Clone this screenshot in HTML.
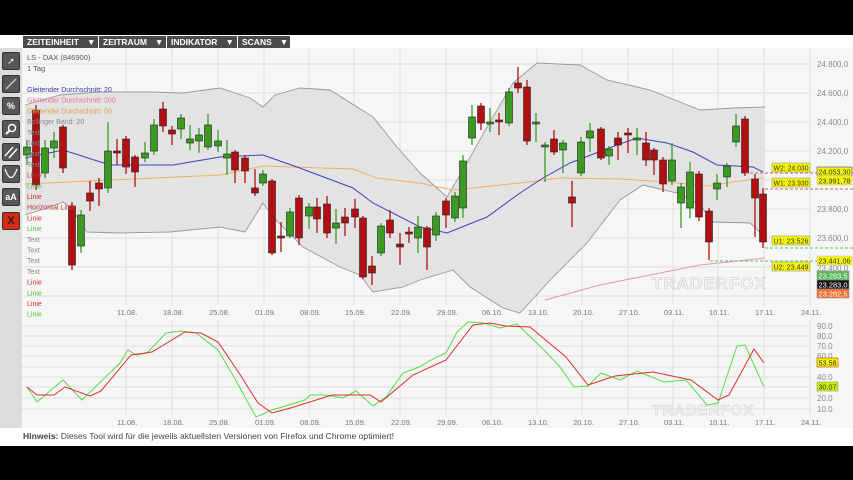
<!DOCTYPE html>
<html><head><meta charset="utf-8"><style>
*{margin:0;padding:0;box-sizing:border-box}
body{width:853px;height:480px;background:#000;position:relative;overflow:hidden;font-family:"Liberation Sans",sans-serif}
#wrap{position:absolute;left:0;top:35px;width:853px;height:411px;background:#fff}
#tb{position:absolute;left:23px;top:1px;height:12px;display:flex}
#tb div{background:#4b4b4b;color:#fff;font-weight:bold;font-size:8.5px;line-height:12px;padding:0 4px 0 4px;margin-right:1px;display:flex;justify-content:space-between}
#tb span{margin-left:8px}
#lp{position:absolute;left:0;top:13px;width:22px;height:380px;background:#dcdcdc}
.bt{position:absolute;left:2px;width:18px;height:18px;background:#575757;border:1px solid #333;border-radius:2px;color:#fff;font-size:9px;text-align:center;line-height:17px}
#hint{position:absolute;left:23px;top:396px;font-size:8.6px;color:#444}
</style></head><body>
<div id="wrap">
<div id="tb"><div style="width:75px">ZEITEINHEIT<span>▼</span></div><div style="width:67px">ZEITRAUM<span>▼</span></div><div style="width:70px">INDIKATOR<span>▼</span></div><div style="width:52px">SCANS<span>▼</span></div></div>
<div id="lp">
<div class="bt" style="top:4px">➚</div>
<div class="bt" style="top:27px"><svg width="16" height="16"><path d="M3 13L13 3" stroke="#ddd" stroke-width="1.2"/></svg></div>
<div class="bt" style="top:49px;font-weight:bold">%</div>
<div class="bt" style="top:72px"><svg width="16" height="16"><circle cx="9" cy="7" r="3.5" stroke="#fff" stroke-width="1.5" fill="none"/><path d="M6.5 9.5L3 13" stroke="#fff" stroke-width="2"/></svg></div>
<div class="bt" style="top:95px"><svg width="16" height="16"><path d="M2 12L10 3M6 14L14 5" stroke="#fff" stroke-width="1.4"/></svg></div>
<div class="bt" style="top:117px"><svg width="16" height="16"><path d="M2 3Q8 20 14 3" stroke="#fff" stroke-width="1.2" fill="none"/></svg></div>
<div class="bt" style="top:140px;font-weight:bold">aA</div>
<div class="bt" style="top:164px;background:#d42a16;color:#222;font-weight:bold;font-size:11px">X</div>
</div>
<div id="hint"><b>Hinweis:</b> Dieses Tool wird für die jeweils aktuellsten Versionen von Firefox und Chrome optimiert!</div>
</div>
<svg id="ch" width="853" height="480" style="position:absolute;left:0;top:0" font-family="Liberation Sans, sans-serif"></svg>
<script>
var s='';
s+='<rect x="22" y="48" width="831" height="380" fill="#f6f6f6"/>';
var dx=[126,172,218,264,309,354,400,446,491,537,582,628,673,718,764,810],dl=['11.08.','18.08.','25.08.','01.09.','08.09.','15.09.','22.09.','29.09.','06.10.','13.10.','20.10.','27.10.','03.11.','10.11.','17.11.','24.11.'];
dx.forEach(function(x){s+='<line x1="'+x+'" y1="48" x2="'+x+'" y2="305" stroke="#dedede"/><line x1="'+x+'" y1="320" x2="'+x+'" y2="415" stroke="#dedede"/>';});
for(var y=64;y<300;y+=29)s+='<line x1="22" y1="'+y+'" x2="810" y2="'+y+'" stroke="#dedede"/>';
[326,336,346,356,367,377,387,398,409].forEach(function(y){s+='<line x1="22" y1="'+y+'" x2="810" y2="'+y+'" stroke="#dedede"/>';});
var up=[[25,105],[60,95],[100,92],[150,92],[183,93],[220,88],[250,98],[263,107],[275,95],[300,88],[330,90],[373,117],[397,147],[420,173],[447,197],[463,170],[487,127],[513,83],[537,63],[580,65],[607,80],[650,90],[700,110],[733,108],[765,107]];
var lo=[[25,215],[47,208],[63,202],[70,207],[87,232],[120,233],[170,232],[220,227],[245,232],[263,203],[273,217],[303,247],[340,267],[360,275],[373,292],[403,287],[420,280],[453,270],[470,287],[503,308],[520,313],[553,277],[587,243],[620,200],[643,185],[677,193],[700,205],[713,222],[750,223],[765,237]];
function pl(a){return a.map(function(p){return p[0]+','+p[1]}).join(' ');}
s+='<polygon points="'+pl(up)+' '+pl(lo.slice().reverse())+'" fill="#e3e3e3"/>';
s+='<polyline points="'+pl(up)+'" fill="none" stroke="#999" stroke-width="0.9"/><polyline points="'+pl(lo)+'" fill="none" stroke="#999" stroke-width="0.9"/>';
s+='<polyline points="545,300 600,285 700,265 765,258" fill="none" stroke="#e890b8" stroke-width="1"/>';
s+='<polyline points="25,184 220,175 263,166 353,169 377,178 420,183 453,190 520,183 560,178 620,179 667,182 707,186 733,182 763,178" fill="none" stroke="#f0b060" stroke-width="1"/>';
s+='<polyline points="25,158 63,150 110,165 173,165 220,157 263,155 297,167 353,188 373,203 420,227 447,233 487,217 520,193 543,178 570,163 617,145 637,138 667,143 693,152 717,165 753,167 763,172" fill="none" stroke="#4040c0" stroke-width="1"/>';
var C=[[27,147,155,140,165,1],[36,110,185,105,190,0],[45,148,173,140,178,1],[54,141,148,132,158,1],[63,127,168,125,173,0],[72,206,265,202,270,0],[81,215,246,210,253,1],[90,193,201,181,211,0],[99,183,189,178,206,0],[108,151,188,122,193,1],[117,151,153,139,165,0],[126,139,167,136,174,0],[135,157,172,155,187,0],[145,153,158,142,162,1],[154,125,151,119,155,1],[163,109,126,102,132,0],[172,130,134,126,145,0],[181,118,129,114,139,1],[190,139,143,125,150,1],[199,135,141,128,153,1],[208,125,147,114,150,1],[218,141,146,130,152,1],[227,154,158,140,175,1],[235,152,170,150,183,0],[245,158,171,155,183,0],[255,188,193,169,196,0],[263,174,183,170,186,1],[272,181,253,179,255,0],[281,236,238,222,252,0],[290,212,236,208,238,1],[299,198,238,195,245,0],[309,207,216,203,229,1],[317,207,219,198,233,0],[327,204,233,196,238,0],[336,223,228,209,244,1],[345,217,223,208,236,0],[355,209,217,199,228,0],[363,218,277,216,279,0],[372,266,273,256,285,0],[381,226,253,223,256,1],[390,220,233,210,238,0],[400,244,247,233,265,0],[409,232,234,227,243,0],[418,227,238,216,253,1],[427,228,247,226,270,0],[436,216,235,212,241,1],[446,201,215,198,228,0],[455,196,218,192,222,1],[463,161,208,155,218,1],[472,117,138,105,145,1],[481,106,123,103,130,0],[490,122,124,108,132,1],[499,120,122,113,135,0],[509,92,123,88,126,1],[518,83,88,67,93,0],[527,87,141,80,145,0],[536,122,124,113,142,1],[545,145,147,142,182,1],[554,139,152,130,155,0],[563,143,150,140,173,1],[572,197,203,181,227,0],[581,142,173,137,176,1],[590,131,138,123,152,1],[601,129,158,127,160,0],[609,149,156,146,165,1],[618,138,145,132,160,0],[628,133,135,128,153,0],[637,138,140,128,155,1],[646,143,160,132,166,0],[654,150,160,148,175,0],[663,160,184,157,192,0],[672,160,181,143,185,1],[681,187,203,183,228,1],[690,172,208,162,218,1],[699,174,217,171,221,0],[709,211,242,208,260,0],[717,183,189,174,200,1],[727,166,177,163,187,1],[736,126,142,114,147,1],[745,119,173,116,176,0],[755,179,198,174,237,0],[763,194,242,188,248,0]];
C.forEach(function(c){var col=c[5]?'#3a9a22':'#b01010';s+='<line x1="'+c[0]+'" y1="'+c[3]+'" x2="'+c[0]+'" y2="'+c[4]+'" stroke="'+col+'" stroke-width="1.3"/>';s+='<rect x="'+(c[0]-3.5)+'" y="'+c[1]+'" width="7" height="'+Math.max(1.5,c[2]-c[1])+'" fill="'+col+'" stroke="#222" stroke-width="0.6"/>';});
s+='<line x1="745" y1="173" x2="853" y2="173" stroke="#d06060" stroke-dasharray="3,2"/><line x1="765" y1="189" x2="853" y2="189" stroke="#d06060" stroke-dasharray="3,2"/>';
s+='<line x1="765" y1="248" x2="853" y2="248" stroke="#60c060" stroke-dasharray="3,2"/><line x1="710" y1="261" x2="853" y2="261" stroke="#60c060" stroke-dasharray="3,2"/>';
function box(x,y,w,t,bg,fc,bd){s+='<rect x="'+x+'" y="'+y+'" width="'+w+'" height="9" fill="'+bg+'" stroke="'+(bd||'#999')+'" stroke-width="0.6"/><text x="'+(x+1.5)+'" y="'+(y+7.5)+'" font-size="7.5" textLength="'+(w-3)+'" lengthAdjust="spacingAndGlyphs" fill="'+fc+'">'+t+'</text>';}
box(772,163,38,'W2: 24.030','#f5f500','#333');box(772,178,38,'W1: 23.930','#f5f500','#333');box(772,236,38,'U1: 23.526','#f5f500','#333');box(772,262,38,'U2: 23.449','#f5f500','#333');
[[64,'24.800,0'],[93,'24.600,0'],[122,'24.400,0'],[151,'24.200,0'],[209,'23.800,0'],[238,'23.600,0'],[268,'23.400,0']].forEach(function(a){s+='<text x="817" y="'+(a[0]+3)+'" font-size="8" fill="#888">'+a[1]+'</text>';});
box(817,167,35,'24.053,30','#f5f500','#333','#4040c0');box(817,176,35,'23.991,78','#f5f500','#333','#ccc');box(817,256,35,'23.441,06','#f5f500','#333','#ccc');
box(817,271,32,'23.283,5','#5cb85c','#fff');box(817,280,32,'23.283,0','#111','#fff');box(817,289,32,'23.282,5','#f07030','#fff');
s+='<text x="652" y="289" font-size="17" font-weight="bold" fill="none" stroke="#d4d4d4" stroke-width="0.8" letter-spacing="1">TRADERFOX</text>';
s+='<text x="652" y="415" font-size="15" font-weight="bold" fill="none" stroke="#d8d8d8" stroke-width="0.7" letter-spacing="1">TRADERFOX</text>';
dl.forEach(function(t,i){s+='<text x="'+(dx[i]-9)+'" y="315" font-size="7.5" fill="#777">'+t+'</text><text x="'+(dx[i]-9)+'" y="425" font-size="7.5" fill="#777">'+t+'</text>';});
[[326,'90.0'],[336,'80.0'],[346,'70.0'],[356,'60.0'],[377,'40.0'],[398,'20.0'],[409,'10.0']].forEach(function(a){s+='<text x="817" y="'+(a[0]+3)+'" font-size="8" fill="#888">'+a[1]+'</text>';});
box(817,358,21,'53.58','#f5f500','#333','#c04020');box(817,382,21,'30.07','#c8f000','#333','#999');
s+='<polyline points="27,387 37,402 63,380 82,400 120,363 128,350 136,355 147,353 166,333 180,331 196,333 218,350 234,377 256,417 272,410 305,400 310,395 326,395 343,398 356,391 373,406 386,397 403,373 419,367 435,358 446,353 457,332 468,322 484,323 500,328 517,324 544,350 560,367 574,387 588,386 601,373 620,380 637,371 664,382 686,380 707,405 718,403 737,346 745,345 764,387" fill="none" stroke="#55dd44" stroke-width="1"/>';
s+='<polyline points="27,387 37,395 54,395 65,387 90,396 101,391 131,355 152,352 185,332 201,333 218,342 239,373 258,403 272,413 294,407 332,395 370,395 381,402 413,375 446,360 473,325 490,323 506,326 530,327 566,357 588,385 615,376 653,372 691,380 718,400 729,395 754,349 764,363" fill="none" stroke="#dd3030" stroke-width="1"/>';
s+='<text x="27" y="60" font-size="7.5" fill="#555">LS - DAX (846900)</text><text x="27" y="71" font-size="7.5" fill="#555">1 Tag</text>';
var L=[['Gleitender Durchschnitt: 20','#3333aa'],['Gleitender Durchschnitt: 200','#e070a0'],['Gleitender Durchschnitt: 50','#e0a040'],['Bollinger Band: 20','#888'],['Text','#888'],['Text','#888'],['Text','#888'],['Text','#888'],['Linie','#d03030'],['Linie','#40cc30'],['Linie','#d03030'],['Horizontal Linie','#d03030'],['Linie','#d03030'],['Linie','#40cc30'],['Text','#888'],['Text','#888'],['Text','#888'],['Text','#888'],['Linie','#d03030'],['Linie','#40cc30'],['Linie','#d03030'],['Linie','#40cc30']];
L.forEach(function(a,i){s+='<text x="27" y="'+(92+i*10.7)+'" font-size="7" fill="'+a[1]+'">'+a[0]+'</text>';});
document.getElementById('ch').innerHTML=s;
</script>
</body></html>
